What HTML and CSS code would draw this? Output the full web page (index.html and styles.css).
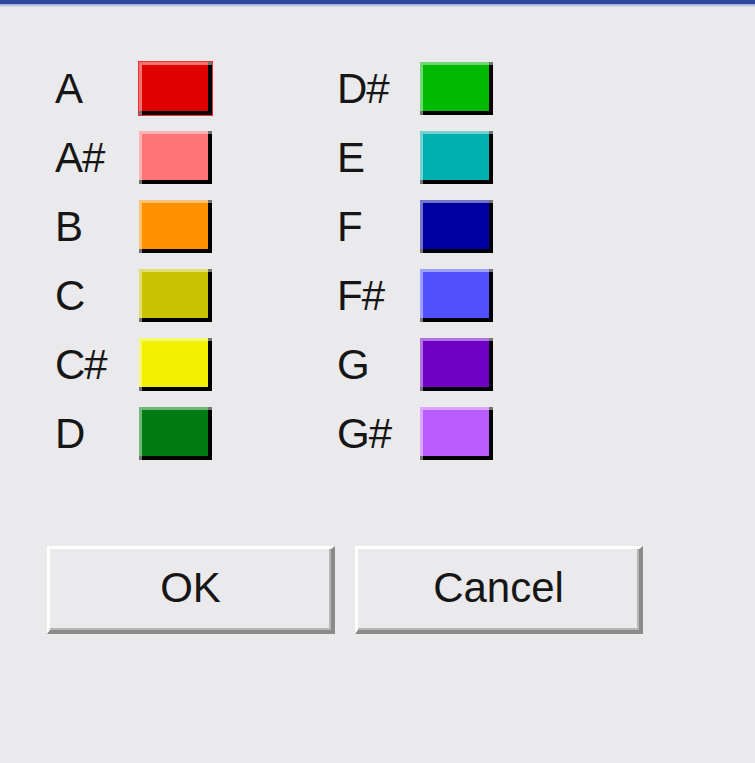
FILE: index.html
```html
<!DOCTYPE html>
<html>
<head>
<meta charset="utf-8">
<link rel="stylesheet" href="styles.css">
</head>
<body>
<div class="titlebar"></div>
<div class="dialog">
  <div class="grid">
    <span class="label">A</span><span class="swatch c-a focused"></span><span class="spacer"></span><span class="label">D#</span><span class="swatch c-ds"></span>
    <span class="label">A#</span><span class="swatch c-as"></span><span class="spacer"></span><span class="label">E</span><span class="swatch c-e"></span>
    <span class="label">B</span><span class="swatch c-b"></span><span class="spacer"></span><span class="label">F</span><span class="swatch c-f"></span>
    <span class="label">C</span><span class="swatch c-c"></span><span class="spacer"></span><span class="label">F#</span><span class="swatch c-fs"></span>
    <span class="label">C#</span><span class="swatch c-cs"></span><span class="spacer"></span><span class="label">G</span><span class="swatch c-g"></span>
    <span class="label">D</span><span class="swatch c-d"></span><span class="spacer"></span><span class="label">G#</span><span class="swatch c-gs"></span>
  </div>
  <div class="buttons">
    <button class="btn">OK</button>
    <button class="btn">Cancel</button>
  </div>
</div>
</body>
</html>
```

FILE: styles.css
```css
html, body {
  margin: 0;
  padding: 0;
  background: #eae9eb;
  font-family: "Liberation Sans", Arial, sans-serif;
  color: #161616;
}
.titlebar {
  height: 7px;
  background: linear-gradient(to bottom, #2b4a9b 0, #2b4a9b 4px, #9aa6d6 4px, #c9cde6 6px, #e4e3ea 7px);
}
.dialog {
  padding: 55px 0 0 47px;
}
.grid {
  display: grid;
  grid-template-columns: 84px 73px 125px 83px 73px;
  grid-auto-rows: 53px;
  row-gap: 16px;
  margin-left: 8px;
  align-items: center;
}
.label {
  font-size: 42px;
  line-height: 53px;
  letter-spacing: -1px;
}
.swatch {
  display: block;
  width: 73px;
  height: 53px;
  box-sizing: border-box;
  box-shadow: inset 3px 3px 0 rgba(255,255,255,0.45), inset -4px -4px 0 #000;
}
.swatch.focused {
  box-shadow: 0 0 0 1px #ff2a2a, inset 3px 3px 0 rgba(255,255,255,0.45), inset -4px -4px 0 #000;
}
.c-a { background: #e00000; }
.c-as { background: #ff7474; }
.c-b { background: #ff9000; }
.c-c { background: #c9c200; }
.c-cs { background: #f2f000; }
.c-d { background: #007a12; }
.c-ds { background: #00b800; }
.c-e { background: #00b0b0; }
.c-f { background: #0000a0; }
.c-fs { background: #5050ff; }
.c-g { background: #7000c4; }
.c-gs { background: #b85cff; }
.buttons {
  display: flex;
  gap: 20px;
  margin-top: 86px;
}
.btn {
  width: 288px;
  height: 88px;
  box-sizing: border-box;
  background: #eae9eb;
  border-style: solid;
  border-width: 3px 4px 4px 3px;
  border-color: #ffffff #8a8a8a #8a8a8a #ffffff;
  box-shadow: inset -2px -2px 0 #b6b6b6;
  font-family: "Liberation Sans", Arial, sans-serif;
  font-size: 42px;
  color: #161616;
  padding: 0 0 4px 0;
}
```
